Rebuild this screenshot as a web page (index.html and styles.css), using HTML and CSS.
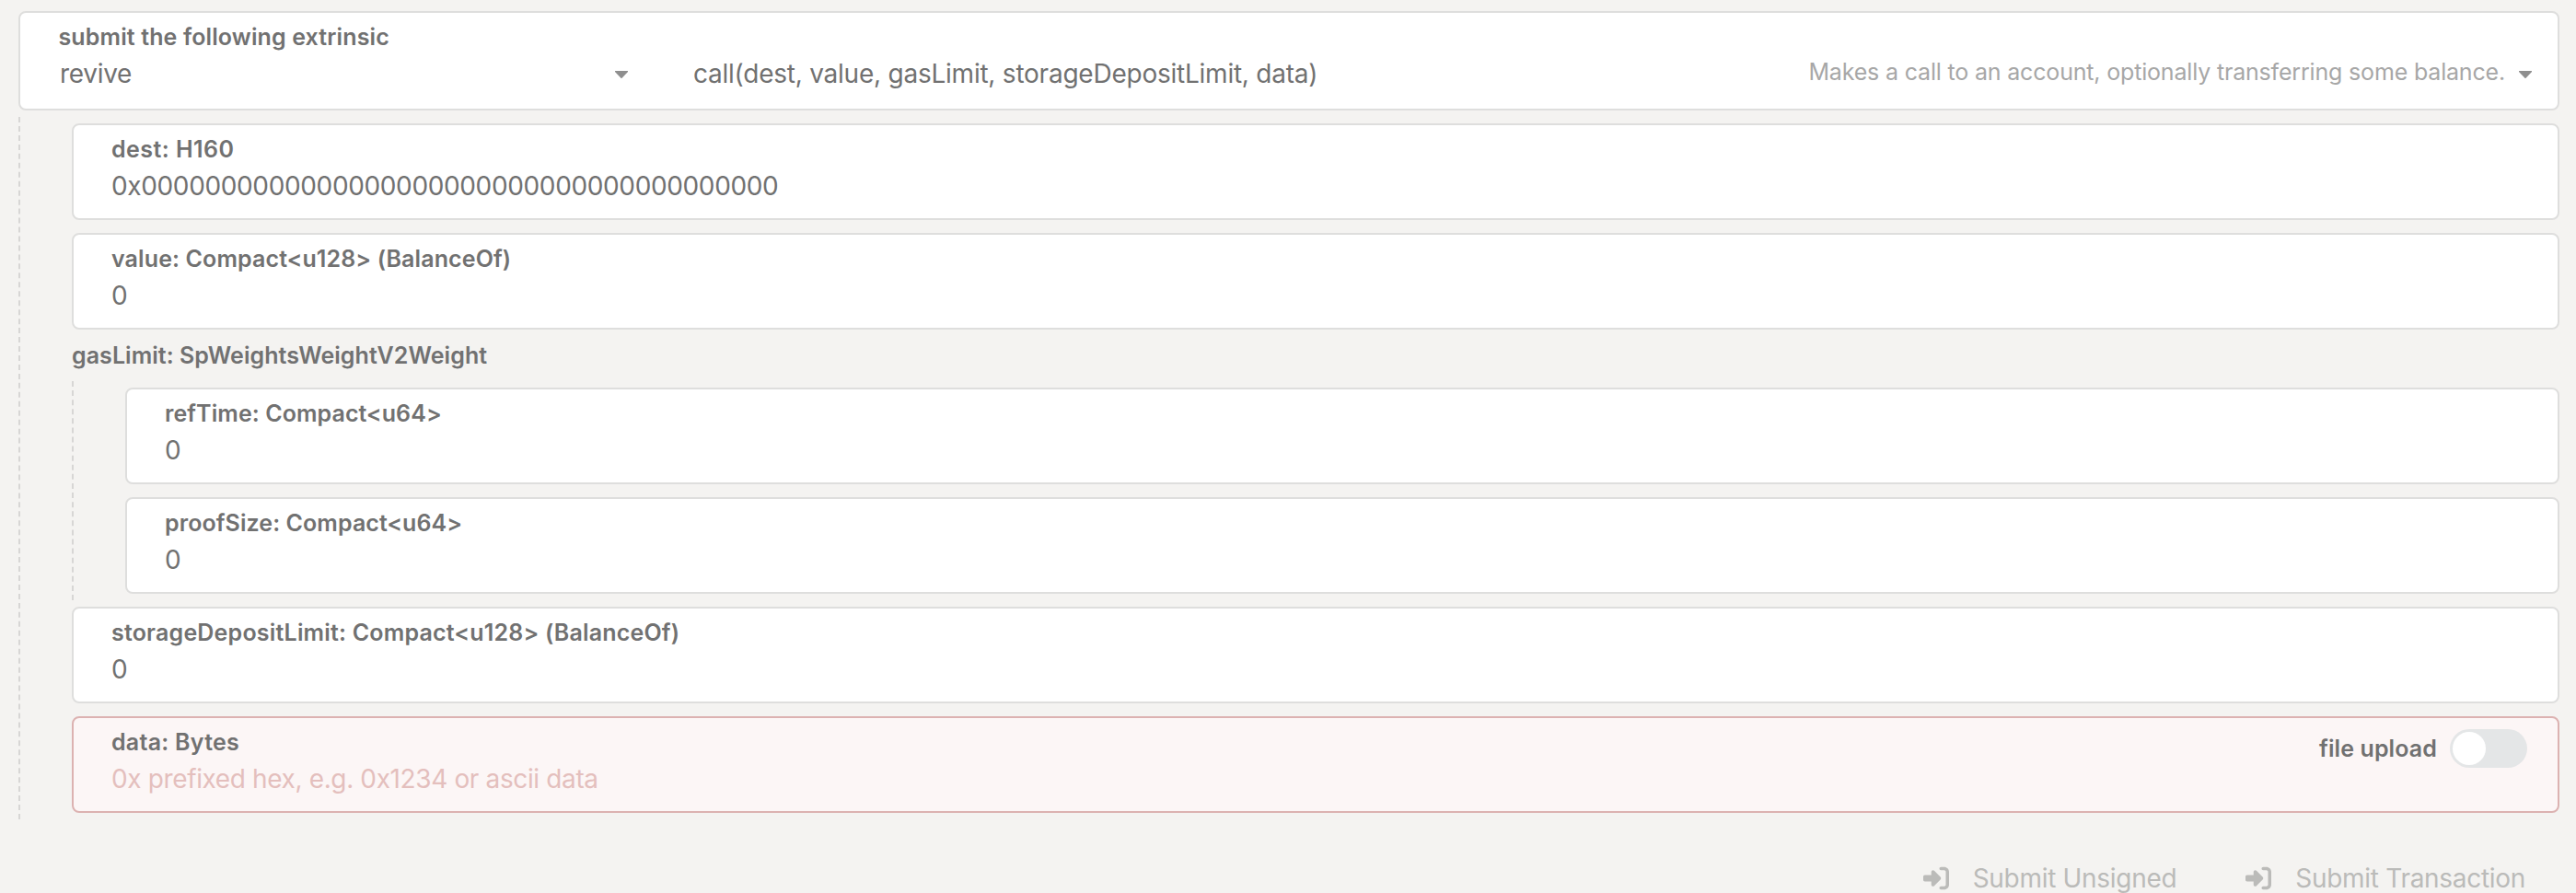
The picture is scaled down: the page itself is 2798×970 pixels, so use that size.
FILE: index.html
```
<!DOCTYPE html>
<html lang="en">
<head>
<meta charset="utf-8">
<title>Extrinsics</title>
<link rel="stylesheet" href="styles.css">
</head>
<body>
<svg class="defs" width="0" height="0" aria-hidden="true">
  <symbol id="sign-in" viewBox="0 0 512 512">
    <path d="M217.9 105.9L340.7 228.7c7.2 7.2 11.3 17.1 11.3 27.3s-4.1 20.1-11.3 27.3L217.9 406.1c-6.4 6.4-15 9.9-24 9.9c-18.7 0-33.9-15.2-33.9-33.9l0-62.1L32 320c-17.7 0-32-14.3-32-32l0-64c0-17.7 14.3-32 32-32l128 0 0-62.1c0-18.7 15.2-33.9 33.9-33.9c9 0 17.6 3.6 24 9.9zM352 416l64 0c17.7 0 32-14.3 32-32l0-256c0-17.7-14.3-32-32-32l-64 0c-17.7 0-32-14.3-32-32s14.3-32 32-32l64 0c53 0 96 43 96 96l0 256c0 53-43 96-96 96l-64 0c-17.7 0-32-14.3-32-32s14.3-32 32-32z"/>
  </symbol>
  <symbol id="caret" viewBox="0 0 14 8">
    <path d="M0 0h14v1L7.6 7.7q-.6.6-1.2 0L0 1z"/>
  </symbol>
</svg>
<main class="page">
  <section class="card extrinsic">
    <div class="label t-submit">submit the following extrinsic</div>
    <div class="selects">
      <div class="select section"><span class="value">revive</span><svg class="caret"><use href="#caret"/></svg></div>
      <div class="select method"><span class="value t-call">call(dest, value, gasLimit, storageDepositLimit, data)</span><span class="hint">Makes a call to an account, optionally transferring some balance.</span><svg class="caret"><use href="#caret"/></svg></div>
    </div>
  </section>
  <div class="params">
    <section class="card">
      <div class="label t-dest">dest: H160</div>
      <div class="value t-hash">0x0000000000000000000000000000000000000000</div>
    </section>
    <section class="card">
      <div class="label t-value">value: Compact&lt;u128&gt; (BalanceOf)</div>
      <div class="value">0</div>
    </section>
    <section class="struct">
      <div class="label t-gas">gasLimit: SpWeightsWeightV2Weight</div>
      <div class="params nested">
        <section class="card">
          <div class="label">refTime: Compact&lt;u64&gt;</div>
          <div class="value">0</div>
        </section>
        <section class="card">
          <div class="label">proofSize: Compact&lt;u64&gt;</div>
          <div class="value">0</div>
        </section>
      </div>
    </section>
    <section class="card">
      <div class="label t-storage">storageDepositLimit: Compact&lt;u128&gt; (BalanceOf)</div>
      <div class="value">0</div>
    </section>
    <section class="card error">
      <div class="field">
        <div class="label t-data">data: Bytes</div>
        <div class="value placeholder">0x prefixed hex, e.g. 0x1234 or ascii data</div>
      </div>
      <div class="upload">
        <span class="label t-upload">file upload</span>
        <span class="toggle"><span class="knob"></span></span>
      </div>
    </section>
  </div>
  <footer class="actions">
    <div class="button"><svg class="icon"><use href="#sign-in"/></svg><span class="value">Submit Unsigned</span></div>
    <div class="button"><svg class="icon"><use href="#sign-in"/></svg><span class="value">Submit Transaction</span></div>
  </footer>
</main>
</body>
</html>
```
FILE: styles.css
```
* { box-sizing: border-box; }

body {
  margin: 0;
  height: 970px;
  overflow: hidden;
  background: #f4f3f1;
  color: #717171;
  font-family: "Inter", sans-serif;
}

.defs { position: absolute; }

.page { padding: 12px 18px 0 20px; }

.card {
  height: 105px;
  padding: 11px 28px 0 41px;
  border: 2px solid #dededd;
  border-radius: 8px;
  background: #fff;
}

.label {
  font-size: 25px;
  font-weight: 600;
  line-height: 30px;
  letter-spacing: 0.08px;
  white-space: nowrap;
}

.value {
  font-size: 28px;
  line-height: 34px;
  letter-spacing: -0.3px;
  white-space: nowrap;
}

.label + .value { margin-top: 8px; }

.extrinsic { height: 108px; }

.selects {
  display: flex;
  gap: 71px;
  margin-top: 8px;
}

.select {
  display: flex;
  align-items: flex-start;
  justify-content: space-between;
}

.section { width: 619px; padding-left: 2px; }

.method { flex: 1; }

.caret {
  flex: none;
  width: 14px;
  height: 8px;
  margin-top: 14px;
  fill: #8f8f8f;
}

.hint {
  margin: 0 15px 0 auto;
  color: #a7a7a7;
  font-size: 25px;
  line-height: 30px;
  letter-spacing: -0.177px;
  white-space: nowrap;
}

.params {
  display: flex;
  flex-direction: column;
  gap: 14px;
  margin-top: 7px;
  padding: 7px 0 7px 56px;
  border-left: 2px dashed #d7d6d5;
}

.struct { margin: -1px 0 -7px; }

.nested { margin-top: 13px; }

.error {
  display: flex;
  justify-content: space-between;
  padding-right: 33px;
  border-color: #dcb2b1;
  background: #fcf6f6;
}

.placeholder {
  color: #e4bfbd;
  letter-spacing: -0.37px;
}

.upload {
  display: flex;
  align-items: center;
  gap: 14px;
  height: 42px;
  margin-top: 1px;
}

.toggle {
  width: 84px;
  height: 42px;
  padding: 3px;
  border-radius: 21px;
  background: #e4e6e7;
}

.knob {
  display: block;
  width: 36px;
  height: 36px;
  border-radius: 50%;
  background: #fff;
}

.actions {
  display: flex;
  justify-content: flex-end;
  gap: 75px;
  margin-top: 47px;
  padding-right: 37px;
  color: #bbbbb9;
}

.button {
  display: flex;
  align-items: center;
  gap: 26px;
}

.icon {
  width: 28px;
  height: 28px;
  fill: currentColor;
}

/* Tracking per caption */
.t-submit { letter-spacing: 0.124px; padding-left: 0.5px; }
.t-dest { letter-spacing: 0.454px; }
.t-value { letter-spacing: 0.12px; }
.t-gas { letter-spacing: 0.05px; }
.t-storage { letter-spacing: 0.195px; }
.t-data { letter-spacing: 0.26px; }
.t-upload { letter-spacing: 0.1px; }
.t-hash { letter-spacing: -0.36px; }
.t-call { letter-spacing: -0.235px; }
```
